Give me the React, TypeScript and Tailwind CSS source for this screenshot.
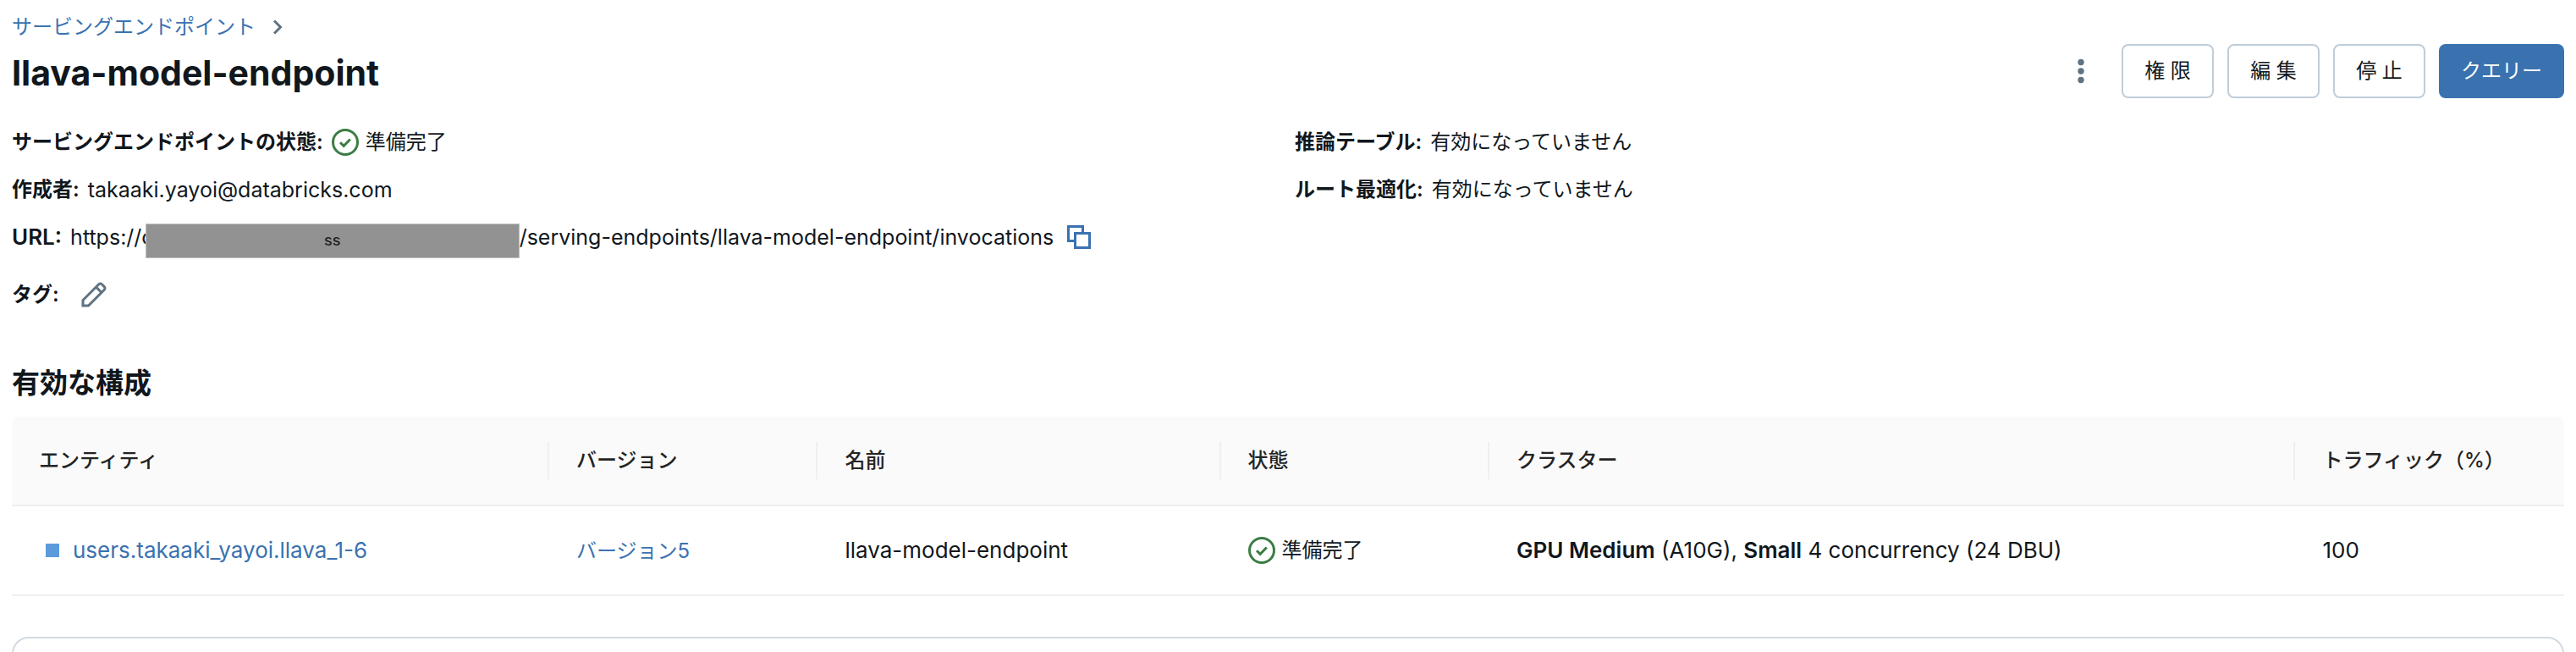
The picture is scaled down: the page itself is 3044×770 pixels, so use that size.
import type { ReactNode } from 'react';

const columns = [
  { label: 'エンティティ', width: 'w-4/19' },
  { label: 'バージョン', width: 'w-2/19' },
  { label: '名前', width: 'w-3/19' },
  { label: '状態', width: 'w-2/19' },
  { label: 'クラスター', width: 'w-6/19' },
  { label: 'トラフィック（%）', width: 'w-2/19' },
];

const actions = ['権 限', '編 集', '停 止'];

function CheckCircle() {
  return (
    <svg viewBox="0 0 32 32" className="h-8 w-8 shrink-0" fill="none" stroke="#3b7d44" strokeWidth="3">
      <circle cx="16" cy="16" r="14.5" />
      <path d="M10 16.2l4.2 4.2 7.6-7.9" />
    </svg>
  );
}

function Ready() {
  return (
    <span className="flex items-center gap-2 text-2xl leading-8">
      <CheckCircle />
      準備完了
    </span>
  );
}

function Field({
  label,
  labelSize = 'text-2xl',
  children,
}: {
  label: string;
  labelSize?: string;
  children: ReactNode;
}) {
  return (
    <div className="flex h-8 items-center gap-2.5">
      <dt className={`${labelSize} font-semibold whitespace-nowrap`}>{label}:</dt>
      <dd className="flex items-center whitespace-nowrap">{children}</dd>
    </div>
  );
}

export default function App() {
  return (
    <main className="flex h-screen flex-col overflow-hidden bg-white px-3.5 pt-4 font-['Inter','Noto_Sans_CJK_JP',sans-serif] text-[25px] leading-8 text-[#11171c]">
      {/* Breadcrumb and title */}
      <header>
        <nav className="flex items-center gap-5">
          <a href="#endpoints" className="text-2xl leading-8 text-[#3a72b0]">
            サービングエンドポイント
          </a>
          <svg viewBox="0 0 12 18" className="h-[18px] w-3" fill="none" stroke="#5f7281" strokeWidth="3">
            <path d="M2 1.5L9.500 9 2 16.500" />
          </svg>
        </nav>
        <div className="-mt-1 flex h-20 items-center justify-between">
          <h1 className="pt-1 text-[41px] font-bold">llava-model-endpoint</h1>
          <div className="flex items-center gap-4 text-2xl">
            <button type="button" aria-label="その他" className="flex h-16 w-16 items-center justify-center">
              <svg viewBox="0 0 8 30" className="h-[30px] w-2" fill="#5f7281">
                <circle cx="4" cy="4.500" r="3.700" />
                <circle cx="4" cy="15" r="3.700" />
                <circle cx="4" cy="25.500" r="3.700" />
              </svg>
            </button>
            {actions.map((action) => (
              <button
                key={action}
                type="button"
                className="h-16 min-w-[109px] rounded-lg border-2 border-[#c0cdd8] px-4 whitespace-nowrap"
              >
                {action}
              </button>
            ))}
            <button type="button" className="h-16 rounded-lg bg-[#3a72b0] px-[26px] text-white">
              クエリー
            </button>
          </div>
        </div>
      </header>

      {/* Endpoint details */}
      <section className="mt-7 grid grid-cols-2 gap-4">
        <dl className="flex flex-col gap-6">
          <Field label="サービングエンドポイントの状態">
            <Ready />
          </Field>
          <Field label="作成者">takaaki.yayoi@databricks.com</Field>
          <Field label="URL" labelSize="text-[26px]">
            https://c
            <span className="mt-2 -ml-2.5 flex h-[41px] w-[442px] items-center justify-center border border-[#c0c0c0] bg-[#929292] text-lg font-medium text-[#222222]">
              ss
            </span>
            /serving-endpoints/llava-model-endpoint/invocations
            <button type="button" aria-label="URLをコピー" className="ml-4">
              <svg viewBox="0 0 28 28" className="h-7 w-7" fill="none" stroke="#3a72b0" strokeWidth="3">
                <path d="M8 18.500H1.500V1.500h17V8" />
                <path d="M9.500 9.500h17v17h-17z" />
              </svg>
            </button>
          </Field>
          <div className="mt-3">
            <Field label="タグ">
              <button type="button" aria-label="タグを編集" className="ml-4">
                <svg viewBox="0 0 30 30" className="h-[30px] w-[30px]" fill="none" stroke="#5f7281" strokeWidth="3">
                  <path d="M2 28v-6.500L20.700 2.800a2.600 2.600 0 0 1 3.700 0l2.800 2.800a2.600 2.600 0 0 1 0 3.700L8.500 28zM17.500 6l6.500 6.500" />
                </svg>
              </button>
            </Field>
          </div>
        </dl>
        <dl className="flex flex-col gap-6">
          <Field label="推論テーブル">
            <span className="text-2xl">有効になっていません</span>
          </Field>
          <Field label="ルート最適化">
            <span className="text-2xl">有効になっていません</span>
          </Field>
        </dl>
      </section>

      {/* Active configuration */}
      <h2 className="mt-16 text-[33px] leading-12 font-semibold">有効な構成</h2>
      <table className="mt-4 w-full shrink-0 table-fixed border-separate border-spacing-0 text-left text-[26px]">
        <thead>
          <tr>
            {columns.map((column, index) => (
              <th
                key={column.label}
                className={`${column.width} h-[106px] border-b-2 border-[#efefef] bg-[#fafafa] p-0 text-2xl font-medium text-[#242424] first:rounded-tl-lg last:rounded-tr-lg`}
              >
                <div
                  className={`flex h-11 items-center pl-8 whitespace-nowrap ${
                    index < columns.length - 1 ? 'border-r-2 border-[#efefef]' : ''
                  }`}
                >
                  {column.label}
                </div>
              </th>
            ))}
          </tr>
        </thead>
        <tbody>
          <tr className="whitespace-nowrap [&>td]:h-[106px] [&>td]:border-b-2 [&>td]:border-[#efefef] [&>td]:p-0 [&>td]:pl-8">
            <td>
              <span className="flex items-center gap-4 pl-2">
                <span className="h-4 w-4 bg-[#5b9bdb]" />
                <a href="#entity" className="text-[#3a72b0]">
                  users.takaaki_yayoi.llava_1-6
                </a>
              </span>
            </td>
            <td>
              <a href="#version" className="text-2xl text-[#3a72b0]">
                バージョン5
              </a>
            </td>
            <td>llava-model-endpoint</td>
            <td>
              <Ready />
            </td>
            <td>
              <strong className="font-semibold">GPU Medium</strong> (A10G),{' '}
              <strong className="font-semibold">Small</strong> 4 concurrency (24 DBU)
            </td>
            <td>100</td>
          </tr>
        </tbody>
      </table>

      <section className="mt-12 h-40 shrink-0 rounded-[20px] border-2 border-[#d3dae3]" />
    </main>
  );
}
